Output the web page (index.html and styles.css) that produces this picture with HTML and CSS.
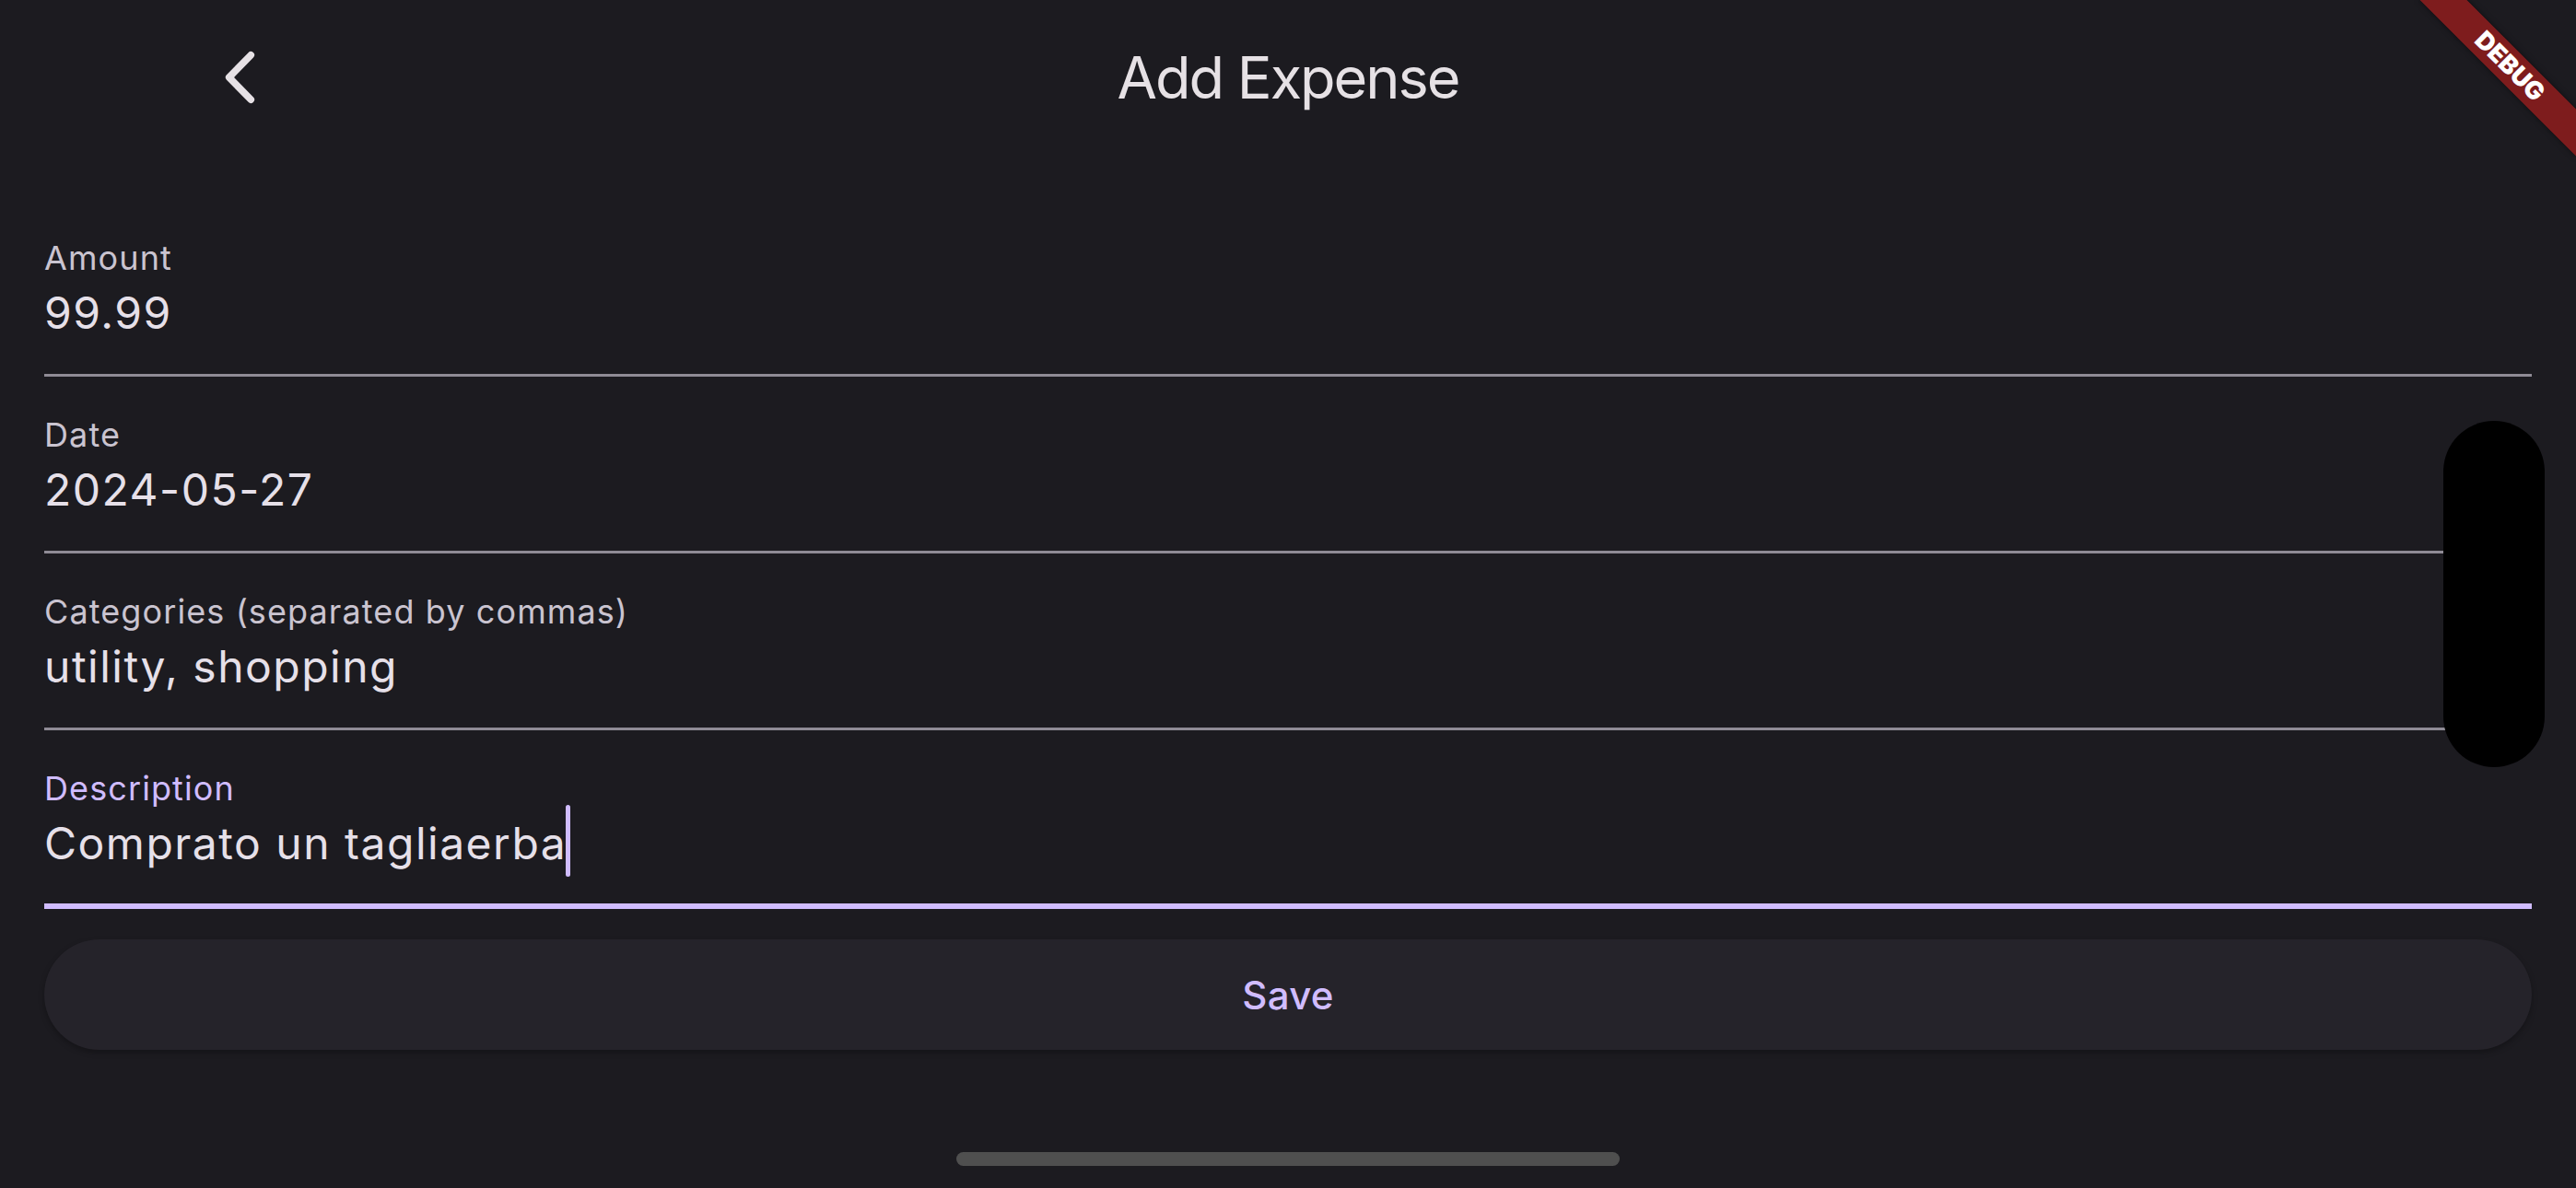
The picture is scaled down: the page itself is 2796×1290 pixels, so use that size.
FILE: index.html
```html
<!DOCTYPE html>
<html lang="en">
<head>
<meta charset="utf-8">
<title>Add Expense</title>
<link rel="stylesheet" href="styles.css">
</head>
<body>
<div class="screen">
  <header class="appbar">
    <div class="leading">
      <button class="back" aria-label="Back">
        <svg viewBox="0 0 24 24" width="72" height="72" aria-hidden="true">
          <polyline points="15.75,3.95 7.9,12 15.75,20.05" fill="none" stroke="#e6e1e5" stroke-width="2.55" stroke-linecap="round" stroke-linejoin="round"/>
        </svg>
      </button>
    </div>
    <h1 class="title">Add Expense</h1>
    <div class="trailing"></div>
  </header>

  <main class="form">
    <div class="field">
      <div class="label">Amount</div>
      <div class="value">99.99</div>
    </div>
    <div class="field">
      <div class="label">Date</div>
      <div class="value">2024-05-27</div>
    </div>
    <div class="field">
      <div class="label">Categories (separated by commas)</div>
      <div class="value">utility, shopping</div>
    </div>
    <div class="field focused">
      <div class="label">Description</div>
      <div class="value">Comprato un tagliaerba<span class="cursor"></span></div>
    </div>
    <button class="save">Save</button>
  </main>

  <div class="island"></div>
  <div class="home-indicator"></div>
  <div class="debug-banner">DEBUG</div>
</div>
</body>
</html>
```

FILE: styles.css
```css
html, body {
  margin: 0;
  padding: 0;
  background: #1c1b20;
}

.screen {
  position: relative;
  width: 2796px;
  height: 1290px;
  overflow: hidden;
  background: #1c1b20;
  font-family: "Inter", "Noto Sans", "Liberation Sans", sans-serif;
  color: #e6e1e5;
}

.appbar {
  height: 168px;
  display: grid;
  grid-template-columns: 1fr auto 1fr;
  align-items: center;
}

.leading {
  display: flex;
  align-items: center;
  padding-left: 225px;
}

.back {
  width: 72px;
  height: 72px;
  padding: 0;
  margin: 0;
  border: 0;
  background: transparent;
  display: block;
}

.back svg {
  display: block;
}

.title {
  margin: 0;
  font-size: 63px;
  font-weight: 400;
  line-height: 168px;
  color: #e6e1e5;
  letter-spacing: -2px;
}

.form {
  padding: 49px 48px 0 48px;
  display: flex;
  flex-direction: column;
}

.field {
  box-sizing: border-box;
  height: 192px;
  padding-top: 39px;
  border-bottom: 3px solid #8f8b95;
}

.field.focused {
  height: 194px;
  border-bottom: 6px solid #d0bcff;
}

.label {
  font-size: 36px;
  line-height: 48px;
  letter-spacing: 1.1px;
  color: #cac4d0;
  white-space: nowrap;
}

.focused .label {
  color: #d0bcff;
}

.value {
  margin-top: 4px;
  font-size: 48px;
  line-height: 63px;
  letter-spacing: 1.5px;
  color: #e6e0e9;
  white-space: nowrap;
}

.cursor {
  display: inline-block;
  width: 5px;
  height: 78px;
  margin: -11px 0 -5px -1px;
  vertical-align: -14px;
  border-radius: 3px;
  background: #d0bcff;
}

.save {
  margin-top: 33px;
  height: 120px;
  border: 0;
  border-radius: 60px;
  background: #25232a;
  box-shadow: 0 3px 6px rgba(0, 0, 0, 0.28);
  color: #d0bcff;
  font-family: "Inter", "Noto Sans", "Liberation Sans", sans-serif;
  font-size: 42px;
  font-weight: 500;
  letter-spacing: 0.3px;
  display: flex;
  align-items: center;
  justify-content: center;
  padding: 0;
}

.island {
  position: absolute;
  left: 2652px;
  top: 457px;
  width: 110px;
  height: 376px;
  border-radius: 55px;
  background: #000;
}

.home-indicator {
  position: absolute;
  left: 1038px;
  top: 1251px;
  width: 720px;
  height: 15px;
  border-radius: 8px;
  background: #4f4f4f;
}

.debug-banner {
  position: absolute;
  left: 2604px;
  top: 54px;
  width: 240px;
  height: 36px;
  transform: rotate(45deg);
  background: rgba(183, 28, 28, 0.63);
  box-shadow: 0 0 6px rgba(0, 0, 0, 0.5);
  color: #fff;
  font-size: 27px;
  font-weight: 900;
  line-height: 36px;
  text-align: center;
}
```
